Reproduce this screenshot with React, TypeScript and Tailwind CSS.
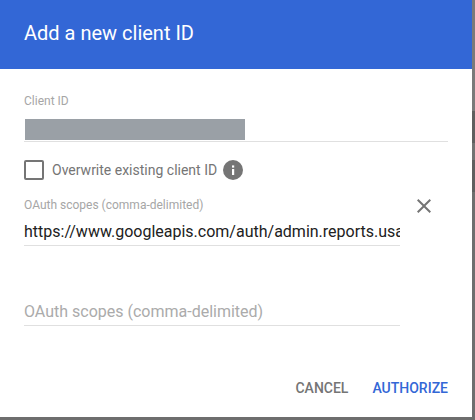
const App = () => {
  return (
    <div className="w-[475px] h-[420px] overflow-hidden bg-[#6e6e6e] font-['Roboto',sans-serif]">
      <div className="flex h-[417px]">
        <div className="w-[472px] h-[417px] bg-white flex flex-col">
          <div className="h-[69px] shrink-0 bg-[#3367d6] pl-6 pt-[19px] text-[20px] leading-[28px] text-white">
            Add a new client ID
          </div>
          <div className="flex-1 pl-6 pr-6">
            <div className="mt-[24px] text-[12px] leading-[16px] text-[#a6a6a6]">Client ID</div>
            <div className="mt-[10px] h-[22px] border-b border-[#e0e0e0] box-content">
              <div className="ml-px w-[220px] h-[21px] bg-[#9aa0a6]" />
            </div>
            <div className="mt-[18px] flex items-center h-[20px]">
              <div className="w-5 h-5 rounded-[2px] border-2 border-[#757575]" />
              <span className="ml-2 text-[14px] text-[#757575]">Overwrite existing client ID</span>
              <svg className="ml-[6px]" width="20" height="20" viewBox="0 0 20 20">
                <circle cx="10" cy="10" r="10" fill="#757575" />
                <rect x="9" y="9" width="2.2" height="6" fill="#fff" />
                <rect x="9" y="5.4" width="2.2" height="2.2" fill="#fff" />
              </svg>
            </div>
            <div className="mt-[17px] flex items-start justify-between">
              <div className="w-[376px]">
                <div className="text-[12px] leading-[16px] text-[#a6a6a6]">OAuth scopes (comma-delimited)</div>
                <div className="mt-[6px] h-[27px] overflow-hidden whitespace-nowrap border-b border-[#e0e0e0] text-[16px] leading-[26px] text-[#212121]">
                  https://www.googleapis.com/auth/admin.reports.usage.readonly
                </div>
              </div>
              <svg className="mr-[12px] mt-[-3px]" width="24" height="24" viewBox="0 0 24 24" fill="#757575">
                <path d="M19 6.41L17.59 5 12 10.59 6.41 5 5 6.41 10.59 12 5 17.59 6.41 19 12 13.41 17.59 19 19 17.59 13.41 12z" />
              </svg>
            </div>
            <div className="mt-[54px] w-[376px] h-[26px] border-b border-[#e0e0e0] text-[16px] leading-[24px] text-[#ababab]">
              OAuth scopes (comma-delimited)
            </div>
          </div>
          <div className="flex justify-end gap-6 pr-[24px] pb-[19px] text-[14px] leading-[20px] font-medium">
            <span className="text-[#757575]">CANCEL</span>
            <span className="text-[#3367d6]">AUTHORIZE</span>
          </div>
        </div>
        {/* backdrop showing past the dialog's right edge */}
        <div className="flex-1 flex flex-col">
          <div className="h-[111px] bg-[#7a7a7a]" />
          <div className="h-[32px] bg-[#5f5f5f]" />
          <div className="h-[17px] bg-[#737373]" />
          <div className="h-[32px] bg-[#5f5f5f]" />
          <div className="flex-1 bg-[#6e6e6e]" />
        </div>
      </div>
    </div>
  );
};

export default App;
